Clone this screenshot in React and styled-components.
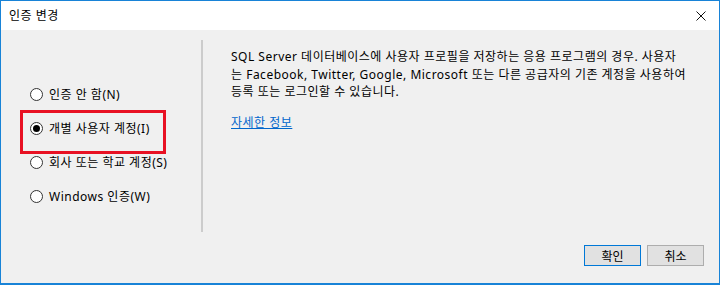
import styled, { createGlobalStyle } from "styled-components";

const GlobalStyle = createGlobalStyle`
  html, body {
    margin: 0;
    padding: 0;
    background: #ffffff;
  }
  * {
    box-sizing: border-box;
  }
`;

const Window = styled.div`
  width: 720px;
  height: 285px;
  border: 1px solid #1883d7;
  border-bottom-width: 2px;
  background: #f0f0f0;
  display: flex;
  flex-direction: column;
  font-family: "Noto Sans", "Noto Sans CJK KR", sans-serif;
  font-size: 12px;
  letter-spacing: 0.5px;
  color: #000;
`;

const TitleBar = styled.div`
  height: 29px;
  background: #fff;
  display: flex;
  align-items: center;
  justify-content: space-between;
  padding: 0 13px 0 8px;
  flex-shrink: 0;
`;

const Title = styled.span`
  font-size: 12px;
  line-height: 1;
`;

const CloseIcon = () => (
  <svg width="10" height="10" viewBox="0 0 10 10">
    <path d="M0.5 0.5 L9.5 9.5 M9.5 0.5 L0.5 9.5" stroke="#111" strokeWidth="1" />
  </svg>
);

const Main = styled.div`
  display: flex;
  padding-top: 10px;
  height: 202px;
  flex-shrink: 0;
`;

const LeftPane = styled.div`
  width: 200px;
  padding-top: 37px;
  display: flex;
  flex-direction: column;
`;

const Divider = styled.div`
  width: 2px;
  background: #cccccc;
`;

const RightPane = styled.div`
  flex: 1;
  padding: 8px 0 0 28px;
`;

const Option = styled.label`
  position: relative;
  height: 34px;
  display: flex;
  align-items: center;
  gap: 6px;
  padding-left: 29px;
  white-space: nowrap;

  ${({ $highlighted }) =>
    $highlighted &&
    `
    &::after {
      content: "";
      position: absolute;
      left: 19px;
      top: -1px;
      width: 140px;
      height: 38px;
      border: 3px solid #e81123;
    }
  `}
`;

const Radio = styled.span`
  width: 13px;
  height: 13px;
  border-radius: 50%;
  border: 1px solid #333;
  background: #fff;
  display: flex;
  align-items: center;
  justify-content: center;
  flex-shrink: 0;

  &::before {
    content: "";
    width: 7px;
    height: 7px;
    border-radius: 50%;
    background: ${({ $checked }) => ($checked ? "#000" : "transparent")};
  }
`;

const Description = styled.p`
  margin: 0;
  line-height: 17.5px;
  white-space: nowrap;
`;

const Link = styled.a`
  display: inline-block;
  margin-top: 13px;
  line-height: 17px;
  color: #0066cc;
  text-decoration: underline;
  cursor: pointer;
`;

const Footer = styled.div`
  display: flex;
  justify-content: flex-end;
  gap: 6px;
  padding: 13px 15px 0 0;
`;

const Button = styled.button`
  width: 57px;
  height: 21px;
  font: inherit;
  font-size: 12px;
  padding: 0;
  background: #e1e1e1;
  border: 1px solid ${({ $default }) => ($default ? "#0078d7" : "#adadad")};
  color: #000;
`;

const options = [
  { label: "인증 안 함(N)" },
  { label: "개별 사용자 계정(I)", checked: true },
  { label: "회사 또는 학교 계정(S)" },
  { label: "Windows 인증(W)" },
];

export default function App() {
  return (
    <>
      <GlobalStyle />
      <Window>
        <TitleBar>
          <Title>인증 변경</Title>
          <CloseIcon />
        </TitleBar>
        <Main>
          <LeftPane>
            {options.map((o) => (
              <Option key={o.label} $highlighted={o.checked}>
                <Radio $checked={o.checked} />
                {o.label}
              </Option>
            ))}
          </LeftPane>
          <Divider />
          <RightPane>
            <Description>
              SQL Server 데이터베이스에 사용자 프로필을 저장하는 응용 프로그램의 경우. 사용자
              <br />
              는 Facebook, Twitter, Google, Microsoft 또는 다른 공급자의 기존 계정을 사용하여
              <br />
              등록 또는 로그인할 수 있습니다.
            </Description>
            <Link>자세한 정보</Link>
          </RightPane>
        </Main>
        <Footer>
          <Button $default>확인</Button>
          <Button>취소</Button>
        </Footer>
      </Window>
    </>
  );
}
